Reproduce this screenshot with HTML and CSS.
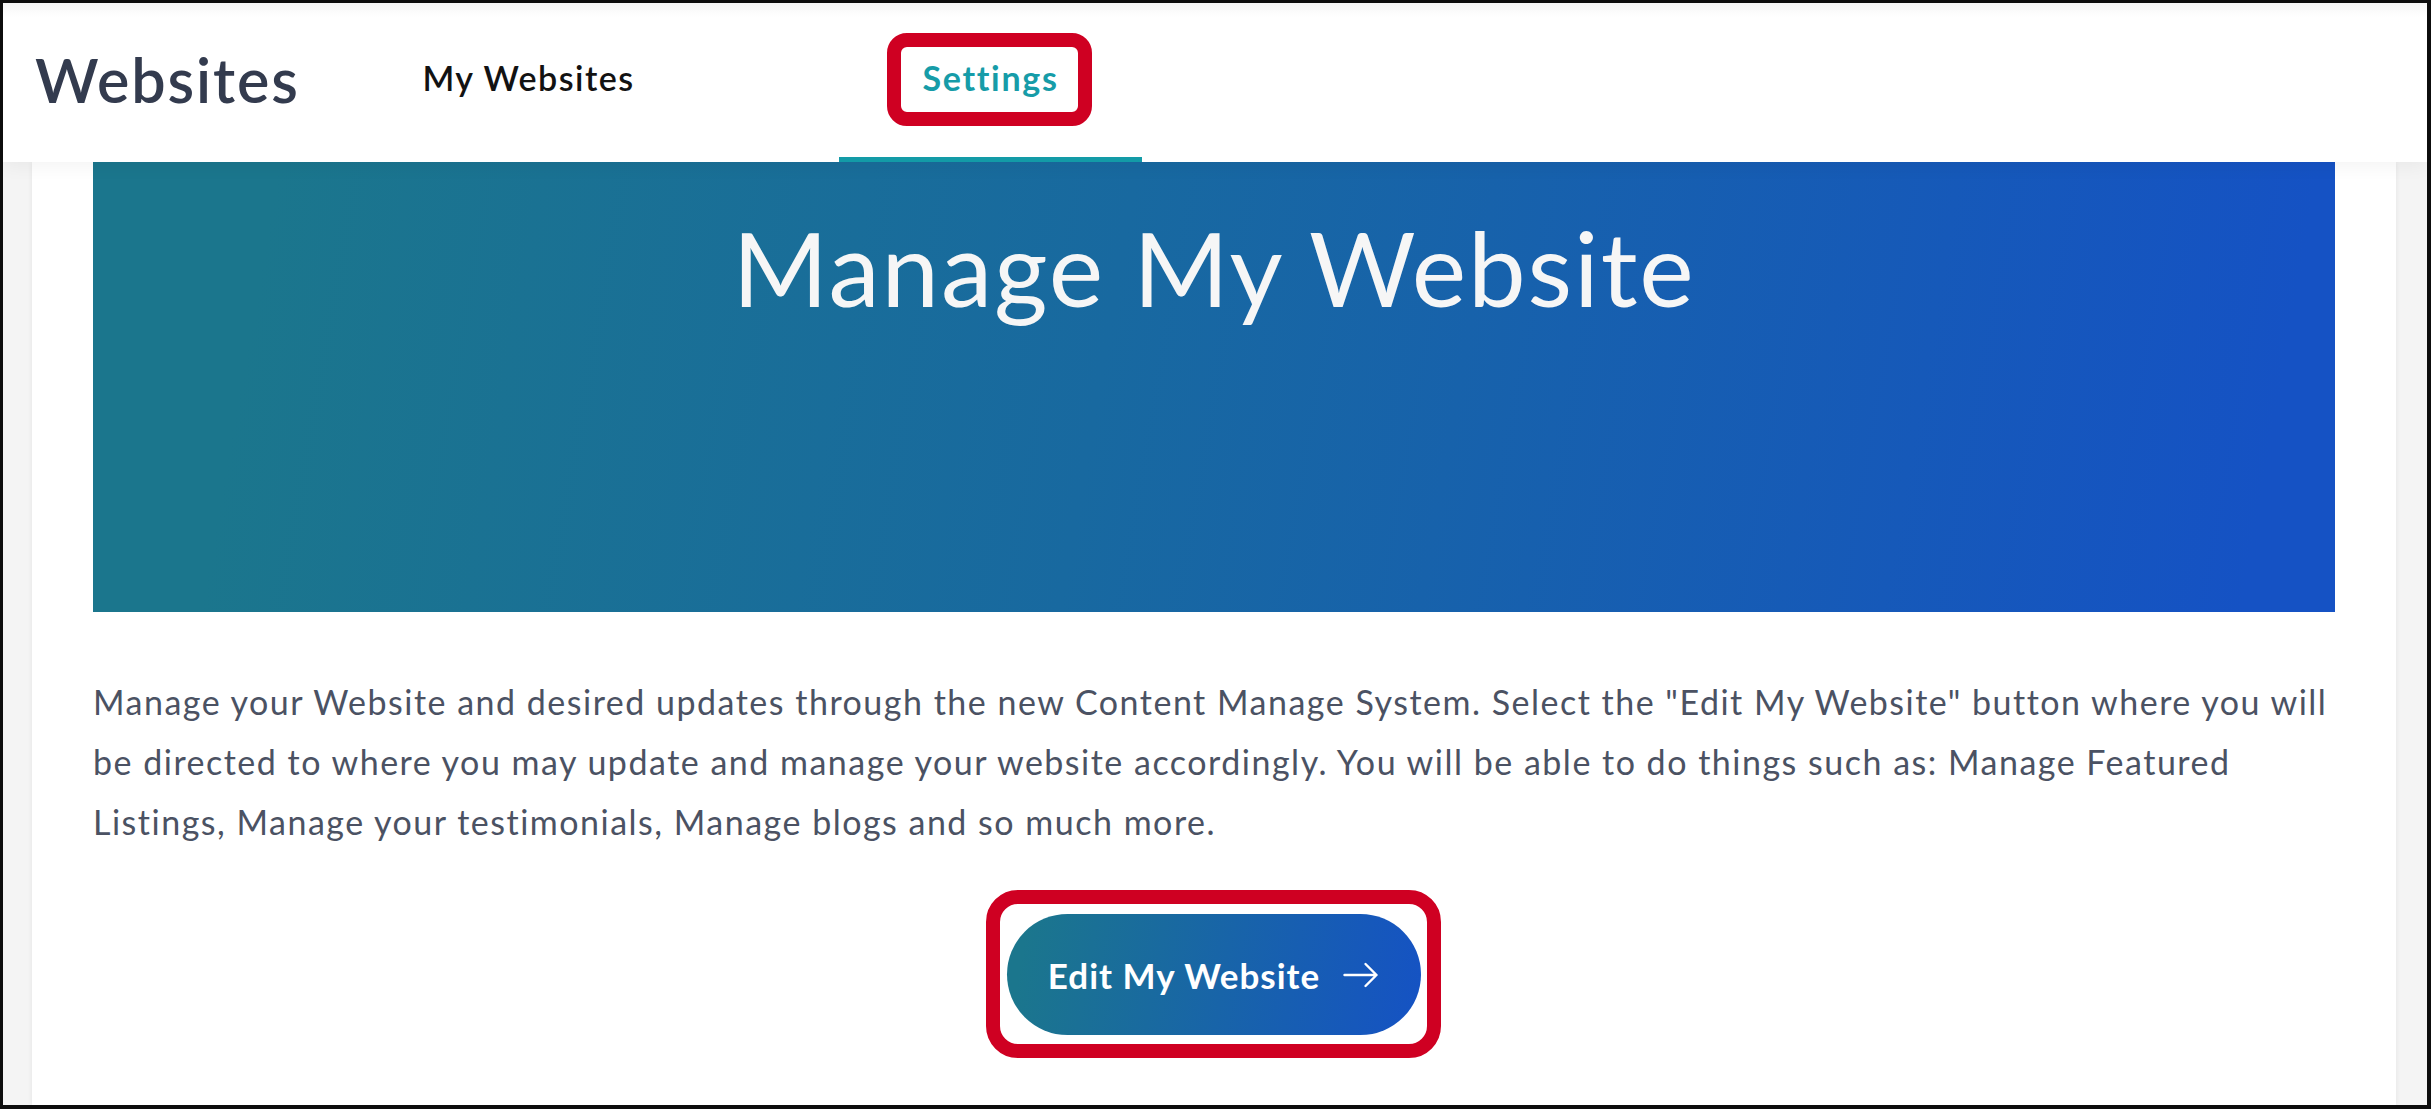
FILE: index.html
```html
<!DOCTYPE html>
<html lang="en">
<head>
<meta charset="utf-8">
<title>Websites - Settings</title>
<link rel="stylesheet" href="styles.css">
</head>
<body>
<div class="frame">
  <header class="topbar">
    <div class="logo">Websites</div>
    <nav class="tabs">
      <a class="tab tab-first">My Websites</a>
      <a class="tab tab-active">Settings<span class="mark mark-tab"></span></a>
    </nav>
  </header>
  <main class="page">
    <section class="card">
      <div class="banner">
        <h1 class="banner-title">Manage My Website</h1>
      </div>
      <p class="intro">Manage your Website and desired updates through the new Content Manage System. Select the "Edit My Website" button where you will<br>be directed to where you may update and manage your website accordingly. You will be able to do things such as: Manage Featured<br>Listings, Manage your testimonials, Manage blogs and so much more.</p>
      <div class="actions">
        <a class="btn">
          <span>Edit My Website</span>
          <svg class="btn-arrow" width="36" height="26" viewBox="0 0 36 26" aria-hidden="true">
            <path d="M1.5 13 H33.5 M22.5 2 L33.5 13 L22.5 24" fill="none" stroke="#ffffff" stroke-width="2.4" stroke-linecap="round" stroke-linejoin="round"/>
          </svg>
          <span class="mark mark-btn"></span>
        </a>
      </div>
    </section>
  </main>
</div>
</body>
</html>
```
FILE: styles.css
```css
* { box-sizing: border-box; }

html, body {
  margin: 0;
  padding: 0;
  background: #ffffff;
}

body {
  font-family: "Lato", "Noto Sans", "Liberation Sans", sans-serif;
}

.frame {
  width: 2431px;
  height: 1109px;
  border: 3px solid #0d0d0d;
  border-bottom-width: 4px;
  border-right-width: 4px;
  display: flex;
  flex-direction: column;
  overflow: hidden;
}

.topbar {
  position: relative;
  z-index: 2;
  height: 159px;
  flex-shrink: 0;
  display: flex;
  align-items: stretch;
  padding-left: 32px;
  background: linear-gradient(180deg, #f6f6f6 0px, #ffffff 14px, #ffffff 100%);
  box-shadow: 0 4px 18px rgba(0, 0, 0, 0.05);
}

.logo {
  width: 305px;
  flex-shrink: 0;
  padding-top: 40px;
  font-size: 61px;
  line-height: 1.2;
  font-weight: 600;
  color: #333b4e;
  letter-spacing: 1.9px;
}

.tabs {
  display: flex;
  align-items: stretch;
}

.tab {
  position: relative;
  display: block;
  text-align: center;
  padding-top: 55px;
  font-size: 34px;
  line-height: 1.2;
  cursor: pointer;
}

.tab-first {
  width: 377px;
  margin-right: 122px;
  font-weight: 600;
  color: #121212;
  letter-spacing: 1.5px;
}

.tab-active {
  width: 303px;
  font-weight: 700;
  color: #169ca8;
  letter-spacing: 1.7px;
  border-bottom: 5px solid #139ba7;
}

.mark {
  position: absolute;
  border: 14px solid #cf0022;
  pointer-events: none;
}

.mark-tab {
  left: 48px;
  top: 30px;
  width: 205px;
  height: 93px;
  border-radius: 20px;
}

.page {
  flex: 1;
  display: flex;
  background: #f4f4f4;
  padding: 0 31px 0 29px;
}

.card {
  flex: 1;
  background: #ffffff;
  padding: 0 61px;
  box-shadow: 0 0 5px rgba(0, 0, 0, 0.07);
}

.banner {
  height: 450px;
  padding-top: 54px;
  background: linear-gradient(100deg, #1b768d 8%, #1869a0 45%, #1552c4 96%);
  text-align: center;
}

.banner-title {
  margin: 0;
  font-size: 103px;
  line-height: 1;
  font-weight: 400;
  color: #f6f6f6;
  letter-spacing: 1.9px;
}

.intro {
  margin: 60px 0 0;
  font-size: 34px;
  line-height: 60px;
  letter-spacing: 1.5px;
  color: #4b5263;
}

.actions {
  display: flex;
  justify-content: center;
  margin-top: 62px;
}

.btn {
  position: relative;
  display: inline-flex;
  align-items: center;
  gap: 23px;
  height: 121px;
  padding: 0 42px 0 41px;
  border-radius: 61px;
  background: linear-gradient(100deg, #1b768d 5%, #1552c4 100%);
  color: #ffffff;
  font-size: 35px;
  font-weight: 700;
  letter-spacing: 1px;
  cursor: pointer;
}

.btn-arrow {
  display: block;
  flex-shrink: 0;
}

.mark-btn {
  left: -21px;
  top: -24px;
  width: 455px;
  height: 168px;
  border-radius: 32px;
}
```
